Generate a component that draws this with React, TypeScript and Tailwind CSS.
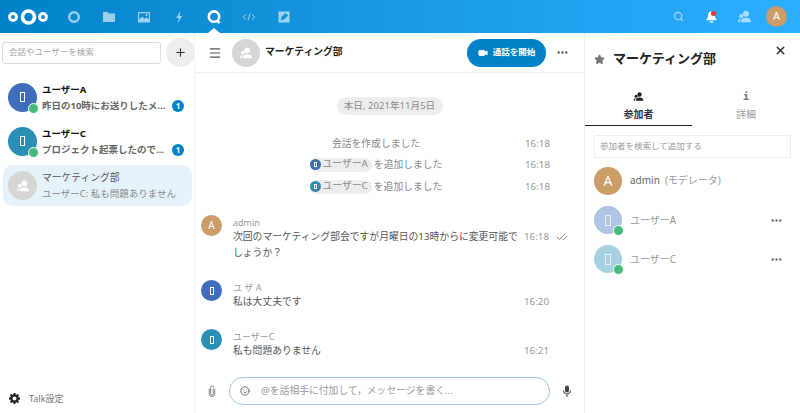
import type { ReactNode } from 'react';
import { Search, Menu, X, Star, Smile, Plus, Video, MoreHorizontal, CheckCheck } from 'lucide-react';

const PeopleIcon = ({ size = 16, className = '' }: { size?: number; className?: string }) => (
    <svg width={size} height={size} viewBox="0 0 16 16" className={className} fill="currentColor">
        <circle cx="9.5" cy="5" r="3.2" />
        <path d="M4 14c0-3 2-4.6 5.5-4.6S15 11 15 14z" />
        <circle cx="4.5" cy="7.5" r="2.2" />
        <path d="M1 14c0-2.4 1-3.8 3.4-3.8-1 .9-1.6 2.1-1.6 3.8z" />
    </svg>
);

const Logo = () => (
    <svg width="40" height="20" viewBox="0 0 40 20" fill="none" stroke="white">
        <circle cx="20.5" cy="10" r="6" strokeWidth="3.6" />
        <circle cx="5" cy="10" r="3.4" strokeWidth="3" />
        <circle cx="35" cy="10" r="3.4" strokeWidth="3" />
    </svg>
);

const GearIcon = () => (
    <svg width="11" height="11" viewBox="0 0 12 12" fill="#222">
        <path fillRule="evenodd" d="M5 0h2l.3 1.6 1 .4L9.700 1.100l1.200 1.200-.9 1.400.4 1L12 5v2l-1.600.3-.4 1 .9 1.400-1.200 1.200-1.400-.9-1 .4L7 12H5l-.3-1.600-1-.4-1.400.9-1.200-1.200.9-1.400-.4-1L0 7V5l1.600-.3.4-1-.9-1.400 1.200-1.200 1.400.9 1-.4zM6 3.800a2.200 2.200 0 1 0 0 4.400 2.200 2.200 0 0 0 0-4.400z" />
    </svg>
);

const ClipIcon = () => (
    <svg width="8" height="12" viewBox="0 0 8 13" fill="none" stroke="#777" strokeWidth="1">
        <path d="M5.300 3.500v6a1.400 1.400 0 0 1-2.800 0V2.800a1.900 1.900 0 0 1 3.800 0" />
        <path d="M1 4v5.500a3 3 0 0 0 6 0V4" />
    </svg>
);

const MicIcon = () => (
    <svg width="10" height="12" viewBox="0 0 10 12" fill="#444">
        <rect x="3" y="0.500" width="4" height="7" rx="2" />
        <path d="M1 5.500h1c0 1.700 1.300 2.900 3 2.900s3-1.200 3-2.900h1c0 2.100-1.500 3.600-3.500 3.800V12h-1V9.300C2.500 9.100 1 7.600 1 5.500z" />
    </svg>
);

const navIcons = [
    <svg key="dash" width="14" height="14" viewBox="0 0 14 14" fill="none" stroke="white" strokeWidth="2.4"><circle cx="7" cy="7" r="4.8" /></svg>,
    <svg key="files" width="14" height="14" viewBox="0 0 14 14" fill="white"><path d="M1.5 2h4l1.5 1.6h5.500a.8.8 0 0 1 .5.8V12H1.500a.6.6 0 0 1-.5-.6V2.600c0-.3.2-.6.5-.6z" /></svg>,
    <svg key="photos" width="14" height="14" viewBox="0 0 14 14" fill="white"><path fillRule="evenodd" d="M1 2h12v10.500H1zM2.200 3.200v6.200l3-3 2.400 2.400 2-1.600 2.200 2.200V3.200zM9.500 4a1 1 0 1 1 0 2.200 1 1 0 0 1 0-2.200z" /></svg>,
    <svg key="activity" width="14" height="14" viewBox="0 0 14 14" fill="white"><path d="M8.500 1 4.200 8h2.600L5.600 13.500 10.200 6H7.600z" /></svg>,
    <svg key="talk" width="16" height="16" viewBox="0 0 16 16" fill="none" stroke="white" strokeWidth="2.6"><circle cx="8" cy="7.600" r="5.200" /><path d="m11 11.400 2.600 2.600" /></svg>,
    <svg key="code" width="14" height="14" viewBox="0 0 14 14" fill="none" stroke="white" strokeWidth="1"><path d="M4 4.500 1.200 7 4 9.500M10 4.500 12.800 7 10 9.500M8 3.500 6 10.500" /></svg>,
    <svg key="notes" width="14" height="14" viewBox="0 0 14 14" fill="white"><path fillRule="evenodd" d="M1.500 1.500h11v11h-11zM3.500 10.500l3.600-.9 4-4-2.600-2.600-4 4z" /></svg>,
];

const Tofu = ({ className = '' }: { className?: string }) => (
    <span className={`block border border-white ${className}`} />
);

const StatusDot = () => (
    <span className="absolute right-[-2px] bottom-[-2px] w-[11px] h-[11px] rounded-full bg-[#46ba78] border border-white" />
);

const Badge = () => (
    <span className="w-3 h-3 rounded-full bg-[#0082c9] text-white text-[8px] font-bold flex items-center justify-center shrink-0">1</span>
);

const Chip = ({ name, color }: { name: string; color: string }) => (
    <span className="inline-flex items-center h-[14px] bg-[#ededed] rounded-full pr-1 mr-[2px] text-[#8a8a8a]">
        <span className={`w-[11px] h-[11px] rounded-full ${color} flex items-center justify-center mr-[2px]`}>
            <Tofu className="w-[3px] h-[5px]" />
        </span>
        {name}
    </span>
);

const SystemRow = ({ children, className = '' }: { children: ReactNode; className?: string }) => (
    <div className={`flex items-center h-4 text-[9.8px] text-[#8a8a8a] ${className}`}>
        <div className="flex-1 flex justify-center pl-[32px]">{children}</div>
        <span className="w-[21px] mr-[38px] text-[#9a9a9a]">16:18</span>
    </div>
);

const Conversation = ({ name, preview, color }: { name: string; preview: string; color: string }) => (
    <div className="flex h-[44px] pl-[5px] items-center">
        <div className={`relative w-[29px] h-[29px] rounded-full ${color} flex items-center justify-center shrink-0`}>
            <Tofu className="w-[5px] h-[10px]" />
            <StatusDot />
        </div>
        <div className="ml-[5px] min-w-0 pt-[2px]">
            <div className="text-[9.5px] leading-4 font-bold text-[#111]">{name}</div>
            <div className="flex items-center text-[9.5px] leading-4 font-bold text-[#666]">
                <span className="w-[130px] whitespace-nowrap">{preview}</span>
                <Badge />
            </div>
        </div>
    </div>
);

const Message = ({ name, color, time, initial, children, className = '' }: { name: string; color: string; time: string; initial?: string; children: ReactNode; className?: string }) => (
    <div className={`relative flex ml-[6px] ${className}`}>
        <div className={`w-[21px] h-[21px] rounded-full ${color} flex items-center justify-center shrink-0 text-white text-[10px]`}>
            {initial ?? <Tofu className="w-[4px] h-[8px]" />}
        </div>
        <div className="w-[290px] ml-[11px] pt-[2px]">
            <div className="h-3 text-[9px] leading-[11px] text-[#999]">{name}</div>
            <div className="text-[9.8px] leading-4 text-[#555]">{children}</div>
        </div>
        <span className="absolute top-[14px] left-[323px] text-[9.8px] leading-4 text-[#9a9a9a]">{time}</span>
    </div>
);

const Member = ({ name, color }: { name: string; color: string }) => (
    <div className="flex items-center h-[28px] mb-[11px]">
        <div className={`relative w-[28px] h-[28px] rounded-full ${color} flex items-center justify-center shrink-0`}>
            <Tofu className="w-[6px] h-[11px] opacity-70" />
            <StatusDot />
        </div>
        <span className="ml-2 text-[10px] text-[#999]">{name}</span>
        <MoreHorizontal size={13} strokeWidth={2.4} className="ml-auto mr-[8px] text-[#666]" />
    </div>
);

export default function App() {
    return (
        <div className="w-[800px] h-[413px] bg-white overflow-hidden flex flex-col font-['Noto_Sans','Noto_Sans_CJK_JP',sans-serif]">
            {/* top bar */}
            <header className="h-[33px] shrink-0 flex items-center bg-gradient-to-r from-[#0082c9] to-[#2cafff]">
                <div className="ml-[8px] mr-[8px] flex"><Logo /></div>
                {navIcons.map((icon, i) => (
                    <div key={i} className={`relative w-[35px] h-[33px] flex items-center justify-center ${i === 4 ? '' : 'opacity-60'}`}>
                        {icon}
                        {i === 4 && <span className="absolute bottom-0 left-[12px] border-x-[6px] border-x-transparent border-b-[5px] border-b-white" />}
                    </div>
                ))}
                <div className="ml-auto flex items-center">
                    <div className="w-[33px] flex justify-center"><Search size={11} strokeWidth={2.4} className="text-white opacity-60" /></div>
                    <div className="relative w-[33px] flex justify-center">
                        <svg width="13" height="14" viewBox="0 0 13 14" fill="white"><path d="M6.500 1.500c-2.200 0-3.400 1.700-3.400 3.800 0 2.100-.7 3.200-1.600 4v.9h10v-.9c-.9-.8-1.600-1.900-1.600-4 0-2.100-1.200-3.800-3.400-3.800zM4.800 11.300h3.400v1.300H4.800z" /></svg>
                        <span className="absolute top-[1px] left-[16px] w-[5px] h-[5px] rounded-full bg-[#e9322d]" />
                    </div>
                    <div className="w-[33px] flex justify-center"><PeopleIcon size={15} className="text-white opacity-60" /></div>
                    <div className="w-[21px] h-[21px] ml-[5px] mr-[13px] rounded-full bg-[#cc9c69] text-white text-[11px] flex items-center justify-center">A</div>
                </div>
            </header>

            <div className="flex-1 flex min-h-0">
                {/* conversation list */}
                <aside className="w-[195px] shrink-0 flex flex-col border-r border-[#f4f4f4]">
                    <div className="flex items-center h-[39px] pl-[2px] shrink-0">
                        <div className="w-[159px] h-[22px] shrink-0 border border-[#dbdbdb] rounded-[3px] flex items-center pl-[6px] text-[8.5px] text-[#a5a5a5]">会話やユーザーを検索</div>
                        <div className="w-[29px] h-[29px] ml-[5px] shrink-0 rounded-full bg-[#ededed] flex items-center justify-center">
                            <Plus size={13} className="text-[#333]" />
                        </div>
                    </div>
                    <div className="mt-[3px] pl-[3px] pr-[3px]">
                        <Conversation name="ユーザーA" preview="昨日の10時にお送りしたメ..." color="bg-[#3f6dbb]" />
                        <Conversation name="ユーザーC" preview="プロジェクト起票したので..." color="bg-[#2b8fb5]" />
                        <div className="flex h-[41px] pl-[5px] items-center bg-[#e6f2fa] rounded-[10px] mt-[2px] w-[189px]">
                            <div className="w-[29px] h-[29px] rounded-full bg-[#d6d6d6] flex items-center justify-center shrink-0">
                                <PeopleIcon size={14} className="text-white" />
                            </div>
                            <div className="ml-[5px] min-w-0 pt-[1px]">
                                <div className="text-[9.8px] leading-4 text-[#555]">マーケティング部</div>
                                <div className="text-[9.5px] leading-4 text-[#8a8a8a] whitespace-nowrap">ユーザーC: 私も問題ありません</div>
                            </div>
                        </div>
                    </div>
                    <div className="mt-auto mb-[8px] ml-[9px] flex items-center text-[9px] text-[#777]">
                        <GearIcon />
                        <span className="ml-[9px]">Talk設定</span>
                    </div>
                </aside>

                {/* chat */}
                <main className="flex-1 min-w-0 flex flex-col border-r border-[#f0f0f0]">
                    <div className="h-[40px] shrink-0 flex items-center border-b border-[#f0f0f0] pl-[13px]">
                        <Menu size={14} className="text-[#555]" />
                        <div className="w-[28px] h-[28px] ml-[10px] rounded-full bg-[#d6d6d6] flex items-center justify-center">
                            <PeopleIcon size={14} className="text-white" />
                        </div>
                        <span className="ml-[5px] text-[9.8px] font-bold text-[#222]">マーケティング部</span>
                        <div className="ml-auto w-[79px] h-[28px] rounded-full bg-[#0082c9] text-white text-[8.5px] font-bold flex items-center justify-center">
                            <Video size={10} fill="white" className="mr-[5px]" />通話を開始
                        </div>
                        <MoreHorizontal size={13} strokeWidth={2.4} className="ml-[10px] mr-[15px] text-[#555]" />
                    </div>

                    <div className="flex-1 min-h-0 flex flex-col">
                        <div className="mt-[24px] flex justify-center">
                            <span className="h-[18px] w-[106px] rounded-full bg-[#ededed] text-[9.6px] text-[#8a8a8a] flex items-center justify-center whitespace-nowrap">本日, 2021年11月5日</span>
                        </div>
                        <SystemRow className="mt-[21px]"><span>会話を作成しました</span></SystemRow>
                        <SystemRow className="mt-[5px]"><Chip name="ユーザーA" color="bg-[#3f6dbb]" />を追加しました</SystemRow>
                        <SystemRow className="mt-[6px]"><Chip name="ユーザーC" color="bg-[#2b8fb5]" />を追加しました</SystemRow>

                        <Message name="admin" color="bg-[#cc9c69]" initial="A" time="16:18" className="mt-[20px]">
                            次回のマーケティング部会ですが月曜日の13時からに変更可能でしょうか？
                            <CheckCheck size={12} className="absolute top-[16px] left-[355px] text-[#888]" />
                        </Message>
                        <Message name="ユ ザ A" color="bg-[#3f6dbb]" time="16:20" className="mt-[19px]">私は大丈夫です</Message>
                        <Message name="ユーザーC" color="bg-[#2b8fb5]" time="16:21" className="mt-[19px]">私も問題ありません</Message>

                        <div className="mt-auto mb-[8px] flex items-center pl-[13px]">
                            <ClipIcon />
                            <div className="ml-[13px] w-[321px] h-[28px] rounded-full border border-[#9cc9e4] flex items-center pl-[10px] text-[9.8px] text-[#9a9a9a] whitespace-nowrap">
                                <Smile size={10} className="text-[#555] mr-[11px]" />
                                @を話相手に付加して，メッセージを書く...
                            </div>
                            <div className="ml-[12px] flex"><MicIcon /></div>
                        </div>
                    </div>
                </main>

                {/* details */}
                <aside className="w-[215px] shrink-0 flex flex-col">
                    <div className="relative h-[52px] flex items-center pl-[9px]">
                        <Star size={11} fill="#777" className="text-[#777]" />
                        <span className="ml-[8px] text-[13px] font-bold text-[#222]">マーケティング部</span>
                        <X size={13} strokeWidth={2.8} className="absolute top-[11px] right-[13px] text-[#333]" />
                    </div>
                    <div className="flex h-[41px] text-[10px]">
                        <div className="w-[107px] border-b border-[#222] flex flex-col items-center font-bold text-[#333]">
                            <PeopleIcon size={11} className="mt-[6px] text-[#222]" />
                            <span className="mt-[5px]">参加者</span>
                        </div>
                        <div className="w-[108px] flex flex-col items-center text-[#9a9a9a]">
                            <span className="mt-[6px] h-[11px] leading-[11px] text-[11px] font-bold text-[#777] font-['DejaVu_Sans_Mono',monospace]">i</span>
                            <span className="mt-[5px]">詳細</span>
                        </div>
                    </div>
                    <div className="ml-[9px] mt-[9px] w-[197px] h-[23px] border border-[#ededed] flex items-center pl-[5px] text-[8.5px] text-[#9a9a9a]">参加者を検索して追加する</div>
                    <div className="mx-[9px] mt-[8px]">
                        <div className="flex items-center h-[29px] mb-[11px]">
                            <div className="w-[28px] h-[28px] rounded-full bg-[#cc9c69] text-white text-[14px] flex items-center justify-center">A</div>
                            <span className="ml-2 text-[10px] text-[#666]">admin</span>
                            <span className="ml-[5px] text-[10px] text-[#9a9a9a]">(モデレータ)</span>
                        </div>
                        <Member name="ユーザーA" color="bg-[#b1c4e4]" />
                        <Member name="ユーザーC" color="bg-[#a7d1e0]" />
                    </div>
                </aside>
            </div>
        </div>
    );
}
